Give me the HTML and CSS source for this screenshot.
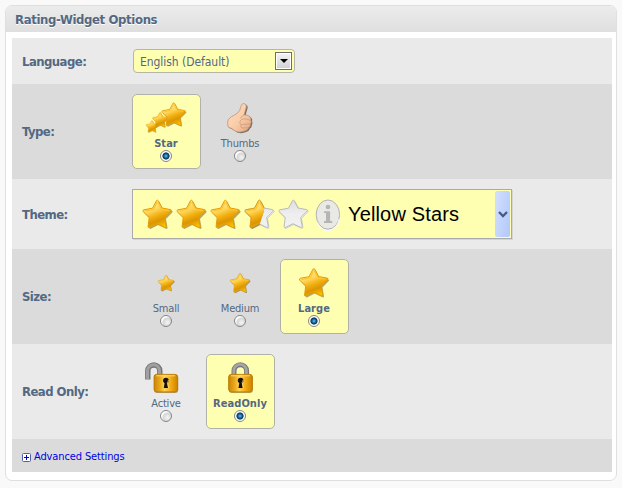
FILE: index.html
```html
<!DOCTYPE html>
<html lang="en">
<head>
<meta charset="utf-8">
<title>Rating-Widget Options</title>
<link rel="stylesheet" href="styles.css">
</head>
<body>
<svg class="defs" width="0" height="0" aria-hidden="true">
  <defs>
    <linearGradient id="gold" x1="0.25" y1="0" x2="0.65" y2="1">
      <stop offset="0" stop-color="#ffe7a0"/><stop offset=".35" stop-color="#fdd860"/><stop offset=".56" stop-color="#f2b011"/><stop offset=".75" stop-color="#dc9500"/><stop offset="1" stop-color="#ffc400"/>
    </linearGradient>
    <linearGradient id="silver" x1="0" y1="0" x2="0" y2="1">
      <stop offset="0" stop-color="#dedede"/><stop offset=".5" stop-color="#eee"/><stop offset="1" stop-color="#f2f2f2"/>
    </linearGradient>
    <linearGradient id="body" x1="0" y1="0" x2="1" y2="0">
      <stop offset="0" stop-color="#c98508"/><stop offset=".25" stop-color="#e9a91b"/><stop offset=".45" stop-color="#ffd355"/><stop offset=".75" stop-color="#f0a60c"/><stop offset="1" stop-color="#c98200"/>
    </linearGradient>
    <linearGradient id="skin" x1="0" y1="0" x2="1" y2="1">
      <stop offset="0" stop-color="#ffe0c4"/><stop offset=".55" stop-color="#f9cca8"/><stop offset="1" stop-color="#e0a480"/>
    </linearGradient>
    <clipPath id="half"><path d="M0 0H20.5L20 12L16 24V32H0z"/></clipPath>
    <path id="shape" d="M14.6 1.5Q15.5 .7 16.3 1.8L20 9L28.7 10.6Q30 11 29 12.2L22.7 18.6L24.2 27.3Q24.2 29 22.7 28.4L15 24.7L7.2 28.6Q6 28.8 6.1 27.4L7.2 18.7L1.3 12.7Q.4 11.3 1.8 10.8L10.5 9.2Z"/>
    <path id="hand" d="M1.3 16.5Q4 13.5 7 12.3Q11 10.5 12.6 7.5L14.3 2.5Q15 .3 17 .5Q19.8 1 19.3 4L17.5 10.5L17 12Q20.5 11.6 22.8 13.5Q24.4 15 23.8 17.2Q25 19.3 23.5 21.2Q24 23.5 21.5 24.8Q21.3 27 18.5 27.8Q12.5 30.3 8.5 28.2Q4.5 25 1.2 24Q-.2 20 1.3 16.5Z"/>
    <symbol id="star" viewBox="0 0 32 32">
      <use href="#shape" x="1.3" y="1.4" fill="#69521f" opacity=".5"/>
      <use href="#shape" fill="url(#gold)" stroke="#e69a04" stroke-width="1"/>
      <path d="M15 3L11.5 10.4L3.2 12M15.8 3L19.3 10.2L27 11.7" fill="none" stroke="#ffc52c" stroke-width="1.2"/>
    </symbol>
    <symbol id="empty" viewBox="0 0 32 32">
      <use href="#shape" x=".7" y=".8" fill="#fff" stroke="#aaa" stroke-width=".6"/>
      <use href="#shape" fill="url(#silver)" stroke="#bababa" stroke-width="1"/>
    </symbol>
    <symbol id="lockbody" viewBox="0 0 26 20">
      <rect x="1" y="1.4" width="24" height="18" rx="3" fill="#7c5a19" opacity=".55"/>
      <rect x=".8" y=".8" width="23.6" height="17.6" rx="2.8" fill="url(#body)" stroke="#bc7d06"/>
      <path d="M3 2.3H22" stroke="#ffd76b"/>
      <circle cx="12.7" cy="7" r="2.8" fill="#160f05"/>
      <path d="M11.6 8H13.8L14.8 14.6H10.6Z" fill="#160f05"/>
      <path d="M15.2 6.5Q15.1 8 14.2 8.8L15.4 14.6" fill="none" stroke="#ffe299" stroke-width=".7"/>
    </symbol>
  </defs>
</svg>
<main class="panel">
  <h1 class="title"><span>Rating-Widget Options</span></h1>
  <div class="rows">
    <section class="row language">
      <div class="name">Language:</div>
      <div class="select"><span>English (Default)</span><i class="drop"><svg width="8" height="4" viewBox="0 0 8 4"><path d="M0 0H8L4 4Z"/></svg></i></div>
    </section>
    <section class="row dark">
      <div class="name">Type:</div>
      <div class="options">
        <label class="option on">
          <svg class="icon" width="67" height="40" viewBox="0 0 67 40"><use href="#star" x="12.5" y="25" width="13.5" height="13.5"/><use href="#star" x="19" y="16.8" width="17" height="17"/><use href="#star" x="28" y="6.8" width="26.5" height="26.5"/></svg>
          <b>Star</b><i class="radio"></i>
        </label>
        <label class="option">
          <svg class="icon" width="67" height="40" viewBox="0 0 67 40"><g transform="translate(20 8)"><use href="#hand" x="1.3" y="1" fill="#4d4038" opacity=".7"/><use href="#hand" fill="url(#skin)" stroke="#c08a68" stroke-width=".7"/><path d="M17 12L13 15.2M13 18Q14.3 15.6 18 15.8L23.6 17.2M13.2 18Q12 20 14 21.5L23.4 21M14 21.5Q13 24 15 25L21.3 24.8" fill="none" stroke="#cf9a78" stroke-width=".8"/></g></svg>
          <b>Thumbs</b><i class="radio"></i>
        </label>
      </div>
    </section>
    <section class="row theme">
      <div class="name">Theme:</div>
      <div class="combo">
        <div class="stars">
          <svg width="32" height="32"><use href="#star" width="32" height="32"/></svg>
          <svg width="32" height="32"><use href="#star" width="32" height="32"/></svg>
          <svg width="32" height="32"><use href="#star" width="32" height="32"/></svg>
          <svg width="32" height="32"><use href="#empty" width="32" height="32"/><g clip-path="url(#half)"><use href="#star" width="32" height="32"/></g></svg>
          <svg width="32" height="32"><use href="#empty" width="32" height="32"/></svg>
          <svg width="32" height="32" viewBox="0 0 32 32"><ellipse cx="15.9" cy="15.6" rx="11.7" ry="14.6" fill="#e9e9e6" stroke="#b2b2b2"/><path d="M5.5 24A11.7 14.6 0 0 0 27.3 20" fill="none" stroke="#f8f8f8" stroke-width="1.2"/><circle cx="16" cy="8" r="2.3" fill="#b5b5b5"/><path d="M12 12.2H18.1V22H20.2V24H12V22H14V14H12Z" fill="#b5b5b5"/></svg>
        </div>
        <span class="value">Yellow Stars</span>
        <i class="arrow"><svg width="10" height="7" viewBox="0 0 10 7"><path d="M1 1L5 5L9 1" fill="none" stroke="#455b86" stroke-width="2.3"/></svg></i>
      </div>
    </section>
    <section class="row dark">
      <div class="name">Size:</div>
      <div class="options">
        <label class="option"><svg class="icon" width="67" height="40"><use href="#star" x="24.5" y="14.5" width="18" height="18"/></svg><b>Small</b><i class="radio"></i></label>
        <label class="option"><svg class="icon" width="67" height="40"><use href="#star" x="22.5" y="12.5" width="22" height="22"/></svg><b>Medium</b><i class="radio"></i></label>
        <label class="option on"><svg class="icon" width="67" height="40"><use href="#star" x="17.5" y="7.5" width="32" height="32"/></svg><b>Large</b><i class="radio"></i></label>
      </div>
    </section>
    <section class="row">
      <div class="name">Read Only:</div>
      <div class="options">
        <label class="option"><svg class="icon" width="67" height="40"><path d="M14.8 24.5V16A6 6 0 0 1 26.8 16V20" fill="none" stroke="#777" stroke-width="5.4"/><path d="M14.5 24V15.7A6 6 0 0 1 26.5 15.7V20" fill="none" stroke="#a0a0a0" stroke-width="3"/><use href="#lockbody" x="20.2" y="18.5" width="26" height="20"/></svg><b>Active</b><i class="radio"></i></label>
        <label class="option on"><svg class="icon" width="67" height="40"><path d="M27 21V16A6.3 6.3 0 0 1 39.6 16V21" fill="none" stroke="#777" stroke-width="5"/><path d="M26.8 21V15.7A6.3 6.3 0 0 1 39.4 15.7V21" fill="none" stroke="#a5a5a5" stroke-width="2.8"/><use href="#lockbody" x="20.9" y="18.5" width="26" height="20"/></svg><b>ReadOnly</b><i class="radio"></i></label>
      </div>
    </section>
    <section class="row dark advanced">
      <svg width="9" height="9" viewBox="0 0 9 9"><rect x=".5" y=".5" width="8" height="8" rx="1" fill="#fff" stroke="#5060a8"/><path d="M2 4.5H7M4.5 2V7" stroke="#0000c8"/></svg>
      <a>Advanced Settings</a>
    </section>
  </div>
</main>
</body>
</html>
```
FILE: styles.css
```css
* { box-sizing: border-box; }
body {
  margin: 0;
  padding: 5px;
  background: #f9f9f9;
  color: #536882;
  font-family: "DejaVu Sans Condensed", "DejaVu Sans", sans-serif;
  font-stretch: condensed;
  font-size: 12px;
}
.defs { position: absolute; }
.panel {
  width: 612px;
  height: 476px;
  border: 1px solid #dfdfdf;
  border-radius: 7px;
  background: #fff;
  overflow: hidden;
}
.title {
  height: 26px;
  margin: 0;
  padding-left: 9px;
  background: linear-gradient(#ececec, #dfdfdf);
  font-size: 13px;
  line-height: 27px;
  letter-spacing: -.37px;
  text-shadow: 0 1px #fff;
}
.rows { width: 600px; margin: 6px 0 0 6px; }
.row {
  display: flex;
  align-items: center;
  height: 95px;
  padding-left: 10px;
  background: #eaeaea;
}
.dark { background: #dbdbdb; }
.language { height: 46px; }
.theme { height: 70px; }
.name { width: 110px; font-size: 13px; font-weight: bold; letter-spacing: -.55px; }
.select {
  display: flex;
  align-items: center;
  justify-content: space-between;
  width: 162px;
  height: 24px;
  margin-left: 1px;
  padding: 0 2px 0 6px;
  border: 1px solid #b5b5a8;
  border-radius: 4px;
  background: #ffffb2;
  line-height: 16px;
  letter-spacing: -.05px;
}
.select span { padding-top: 1px; }
.drop {
  display: flex;
  align-items: center;
  justify-content: center;
  width: 17px;
  height: 18px;
  border: 1px solid #6d6d6d;
  background: linear-gradient(#f4f4f4, #d0d0d0);
  box-shadow: inset 0 0 0 1px #fff;
}
.options { display: flex; gap: 5px; }
.option {
  display: flex;
  flex-direction: column;
  align-items: center;
  width: 69px;
  height: 75px;
  border: 1px solid transparent;
  border-radius: 5px;
}
.option b {
  height: 14px;
  margin-right: 1px;
  font-size: 11px;
  font-weight: normal;
  line-height: 17px;
  letter-spacing: -.2px;
}
.on { border-color: #b1b1a8; background: #ffffb2; }
.option.on b { font-weight: bold; letter-spacing: .05px; }
.icon { display: block; flex: none; }
.radio {
  width: 12px;
  height: 12px;
  margin: 1px 1px 0 0;
  border: 1px solid #858585;
  border-radius: 50%;
  background: radial-gradient(circle at 65% 65%, #f4f4f4 0, #d5d5d5 50%, #fff 60%);
}
.on .radio { background: radial-gradient(circle, #63c5e8 0, #1474a6 24%, #102c4c 45%, #fff 56%); }
.combo {
  display: flex;
  align-items: center;
  width: 380px;
  height: 50px;
  padding: 0 1px 0 9px;
  border: 1px solid #aaa;
  background: #ffffb2;
  box-shadow: 1px 1px #d5d5d5;
}
.stars { display: flex; gap: 2px; width: 206px; padding-top: 2px; }
.stars svg { flex: none; }
.value { color: #000; font: 20px "Liberation Sans", sans-serif; letter-spacing: .15px; }
.arrow {
  display: flex;
  align-items: center;
  justify-content: center;
  width: 15px;
  height: 46px;
  margin-left: auto;
  border-radius: 2px;
  background: linear-gradient(100deg, #d3e0ff, #b2c8fa);
}
.advanced { height: 33px; padding-top: 2px; font-size: 11px; }
.advanced svg { margin: 1px 3px 0 0; }
.advanced a { color: #0000e8; letter-spacing: -.12px; }
```
